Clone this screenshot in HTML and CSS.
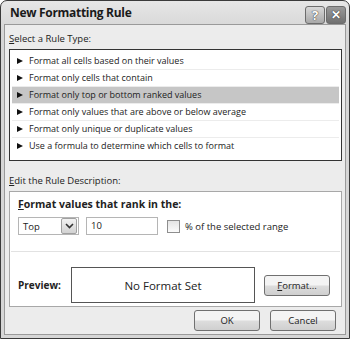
FILE: index.html
```html
<!DOCTYPE html>
<html lang="en">
  <head>
    <meta charset="UTF-8" />
    <title>New Formatting Rule</title>
    <link rel="stylesheet" href="styles.css">
  </head>
  <body>
    <div class="window">
      <div class="titlebar">
        <span class="title">New Formatting Rule</span>
        <div class="title-buttons">
          <span class="tb-btn help">?</span>
          <span class="tb-btn close">&#x2715;</span>
        </div>
      </div>
      <div class="content">
        <div class="label"><u>S</u>elect a Rule Type:</div>
        <ul class="rule-list">
          <li><span class="arrow"></span>Format all cells based on their values</li>
          <li><span class="arrow"></span>Format only cells that contain</li>
          <li class="selected"><span class="arrow"></span>Format only top or bottom ranked values</li>
          <li><span class="arrow"></span>Format only values that are above or below average</li>
          <li><span class="arrow"></span>Format only unique or duplicate values</li>
          <li><span class="arrow"></span>Use a formula to determine which cells to format</li>
        </ul>

        <div class="label edit-label"><u>E</u>dit the Rule Description:</div>
        <div class="desc">
          <div class="desc-top">
            <div class="desc-title"><u>F</u>ormat values that rank in the:</div>
            <div class="controls">
              <div class="select">
                <span>Top</span>
                <span class="drop">
                  <svg width="9" height="6" viewBox="0 0 9 6"><path d="M1 1 L4.5 4.5 L8 1" fill="none" stroke="#333" stroke-width="1.6"/></svg>
                </span>
              </div>
              <div class="textbox">10</div>
              <span class="checkbox"></span>
              <span class="check-label">% of the selected range</span>
            </div>
          </div>
          <div class="preview-row">
            <span class="preview-label">Preview:</span>
            <div class="preview-box">No Format Set</div>
            <button class="btn format-btn"><u>F</u>ormat...</button>
          </div>
        </div>

        <div class="actions">
          <button class="btn">OK</button>
          <button class="btn">Cancel</button>
        </div>
      </div>
    </div>
  </body>
</html>
```

FILE: styles.css
```css
body {
  margin: 0;
  padding: 0;
  background: #fff;
  font-family: "Open Sans", sans-serif;
  font-size: 9.5px;
  color: #222;
}

.window {
  width: 350px;
  height: 339px;
  box-sizing: border-box;
  border: 1px solid #3a3a3a;
  border-radius: 7px 7px 0 0;
  background: linear-gradient(#e6e6e6, #d6d6d6 30px, #d6d6d6);
  padding: 0 3px 3px 3px;
  display: flex;
  flex-direction: column;
}

.titlebar {
  height: 23px;
  display: flex;
  align-items: center;
  justify-content: space-between;
  padding-left: 6px;
}

.title {
  font-size: 12px;
  font-weight: bold;
  color: #1a1a1a;
  letter-spacing: -0.3px;
}

.title-buttons {
  display: flex;
  gap: 1px;
  margin-top: 4px;
}

.tb-btn {
  width: 18px;
  height: 16px;
  border: 1px solid #6c6c6c;
  border-radius: 3px;
  display: flex;
  align-items: center;
  justify-content: center;
  color: #fff;
  font-weight: bold;
  font-size: 13px;
  text-shadow: 0 0 1px #333, 0 0 1px #333;
}

.help {
  background: linear-gradient(#d8d8d8, #a8a8a8);
}

.close {
  background: linear-gradient(#9a9a9a, #707070);
  font-size: 12px;
}

.content {
  flex: 1;
  border: 1px solid #9a9a9a;
  background: #ececec;
  padding: 6px 3px 0 4px;
  display: flex;
  flex-direction: column;
}

.label {
  height: 16px;
  line-height: 16px;
  margin-bottom: 2px;
}

.rule-list {
  list-style: none;
  margin: 0;
  padding: 3px 2px;
  background: #fff;
  border: 1px solid #333;
  height: 104px;
  font-size: 9px;
}

.rule-list li {
  height: 16px;
  line-height: 16px;
  padding-left: 5px;
  border-bottom: 1px solid #ececec;
  display: flex;
  align-items: center;
}

.rule-list li:last-child {
  border-bottom: none;
}

.arrow {
  width: 0;
  height: 0;
  border-top: 3.5px solid transparent;
  border-bottom: 3.5px solid transparent;
  border-left: 6px solid #111;
  margin-right: 6px;
}

.rule-list .selected {
  background: #c6c6c6;
}

.edit-label {
  margin-top: 12px;
}

.desc {
  background: #fff;
  border: 1px solid #a8a8a8;
  height: 116px;
  box-sizing: border-box;
}

.desc-top {
  padding: 4px 7px 0 7px;
  height: 55px;
  border-bottom: 1px solid #e2e2e2;
  margin: 0 1px;
}

.desc-title {
  font-weight: bold;
  font-size: 10.5px;
  height: 17px;
  line-height: 17px;
}

.controls {
  display: flex;
  align-items: center;
  margin-top: 4px;
}

.select {
  width: 55px;
  height: 16px;
  border: 1px solid #b5b5b5;
  display: flex;
  align-items: center;
  justify-content: space-between;
  padding-left: 4px;
  box-sizing: content-box;
}

.drop {
  width: 14px;
  height: 14px;
  margin-right: 1px;
  border: 1px solid #a0a0a0;
  border-radius: 2px;
  background: linear-gradient(#f2f2f2, #d2d2d2);
  display: flex;
  align-items: center;
  justify-content: center;
}

.textbox {
  margin-left: 7px;
  width: 66px;
  height: 16px;
  line-height: 16px;
  border: 1px solid #b5b5b5;
  padding-left: 4px;
}

.checkbox {
  margin-left: 9px;
  width: 11px;
  height: 11px;
  border: 1px solid #8e8e8e;
  background: linear-gradient(#e4e4e4, #fbfbfb);
}

.check-label {
  margin-left: 5px;
}

.preview-row {
  display: flex;
  align-items: center;
  padding: 15px 0 0 8px;
}

.preview-label {
  font-weight: bold;
  font-size: 10px;
  width: 53px;
}

.preview-box {
  width: 182px;
  height: 34px;
  border: 1px solid #555;
  display: flex;
  align-items: center;
  justify-content: center;
  font-size: 11.5px;
}

.btn {
  font-family: "Open Sans", sans-serif;
  font-size: 9.5px;
  color: #222;
  width: 66px;
  height: 21px;
  padding: 0;
  border: 1px solid #707070;
  border-radius: 3px;
  background: linear-gradient(#f4f4f4 45%, #dcdcdc 55%, #cfcfcf);
}

.format-btn {
  margin-left: 9px;
}

.actions {
  display: flex;
  justify-content: flex-end;
  gap: 10px;
  padding: 3px 6px 0 0;
}
```
